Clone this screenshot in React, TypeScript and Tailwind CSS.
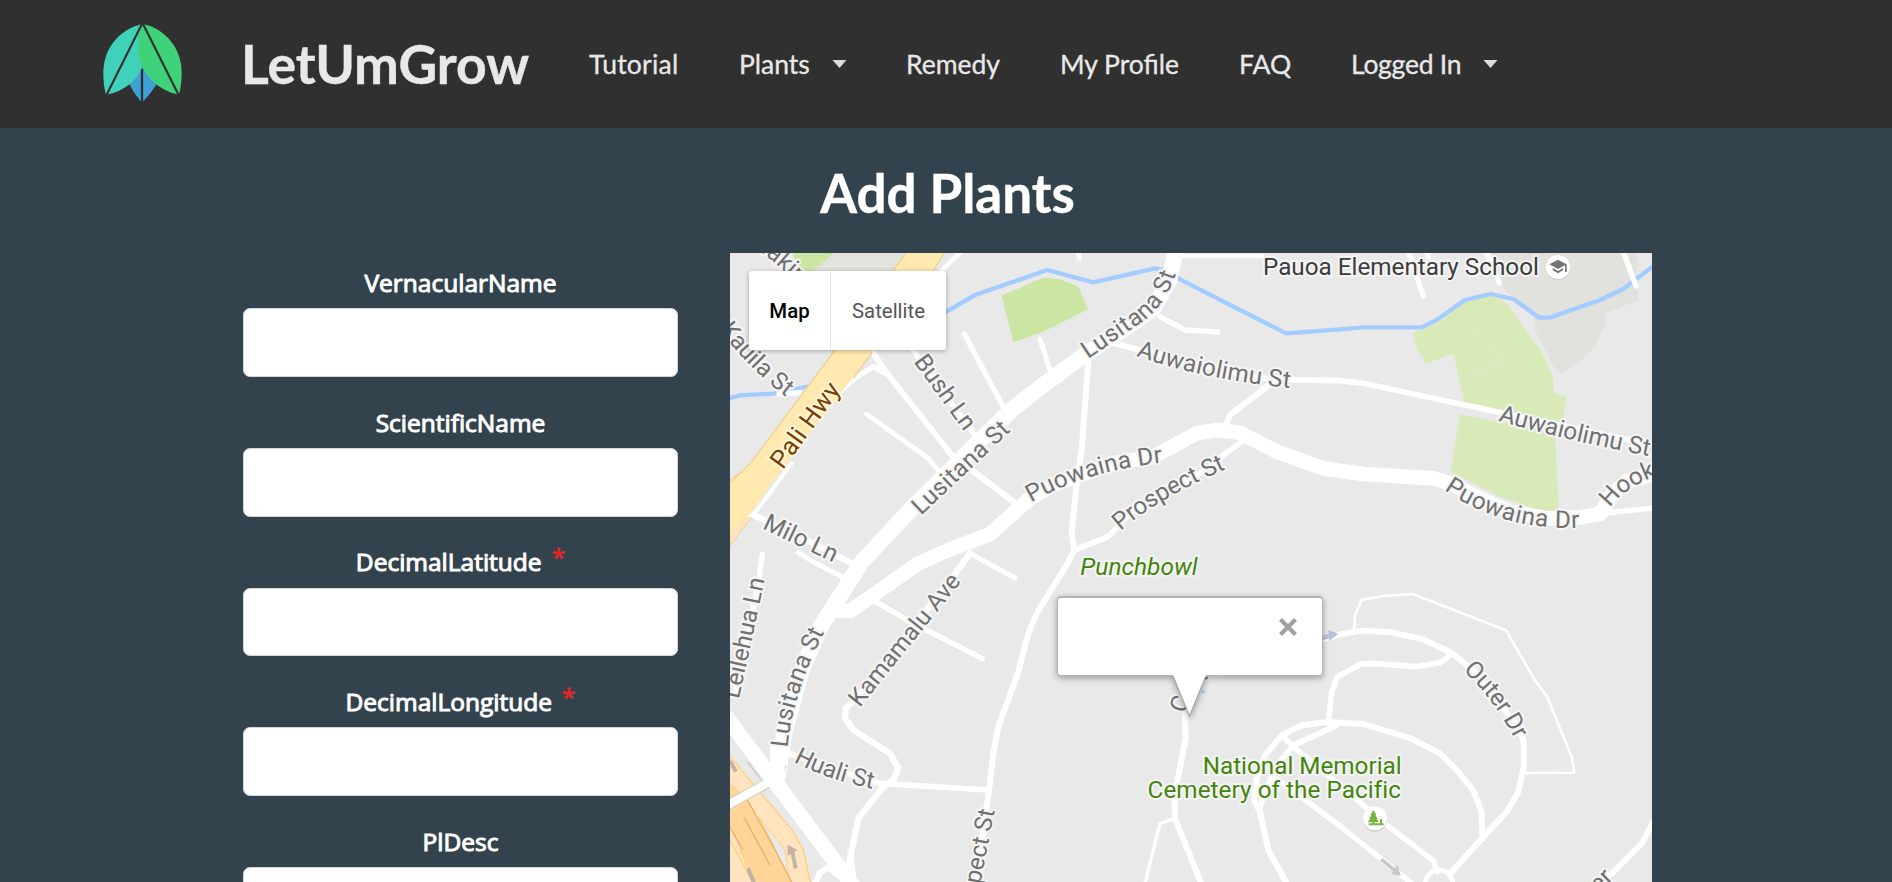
import React from "react";

type Item = { label: string; width: string; caret?: boolean };

const navItems: Item[] = [
  { label: "Tutorial", width: "w-[150px] tracking-[0.250px]" },
  { label: "Plants", width: "w-[167px]", caret: true },
  { label: "Remedy", width: "w-[154px]" },
  { label: "My Profile", width: "w-[179px]" },
  { label: "FAQ", width: "w-[112px]" },
  { label: "Logged In", width: "w-[160px] tracking-[-0.250px]", caret: true },
];

const fields = [
  { label: "VernacularName" },
  { label: "ScientificName" },
  { label: "DecimalLatitude", required: true },
  { label: "DecimalLongitude", required: true },
  { label: "PlDesc" },
];

/* Roads: [stroke width, points] */
const roads: [number, string][] = [
  [48, "1337,0 1318,90 1270,175 1200,225 1070,310 940,405 850,475 730,590 540,780 395,936 325,1046 272,1130 215,1260 165,1440 142,1580"],
  [44, "300,1081 360,1083 430,1035 565,940 660,898 780,852 900,745 980,700 1150,640 1270,620 1400,550 1460,540 1530,548 1640,605 1780,655 1830,662 1900,672 2110,685 2160,700 2250,745 2340,785 2450,805 2540,803 2610,793 2645,735 2690,695 2770,672"],
  [16, "2620,790 2770,774"],
  [14, "690,9 620,75"],
  [16, "475,375 430,350 375,385 330,425"],
  [18, "430,310 475,375 665,615 850,755"],
  [15, "410,493 595,625 640,680"],
  [15, "545,295 760,590"],
  [16, "703,252 830,490"],
  [12, "185,640 70,795 50,795"],
  [18, "70,795 190,850 375,945"],
  [15, "205,908 250,936 345,985"],
  [16, "97,912 85,1000 15,1330"],
  [15, "720,910 855,984"],
  [19, "720,910 680,965 375,1350 347,1375 345,1405 370,1440 480,1510 505,1555 490,1590 460,1610 385,1705 355,1850 350,1900"],
  [16, "430,1051 550,1120 757,1226"],
  [17, "150,1500 320,1560 450,1600 775,1620"],
  [18, "1075,330 1055,600 1040,700 1025,850 1033,900 1015,936 920,1090 895,1150 865,1266 805,1430 790,1510 775,1640 765,1700 740,1896"],
  [17, "1033,900 1135,860 1200,790 1460,640 1480,615 1535,575"],
  [17, "1150,280 1230,300 1500,365 1620,388 1830,392 1900,400 2205,465 2320,490 2770,585"],
  [18, "1630,395 1500,495 1490,520"],
  [16, "1290,200 1365,240 1463,246"],
  [15, "930,268 960,360"],
  [14, "1360,18 1595,18"],
  [15, "1045,5 1048,25"],
  [16, "2035,5 2080,138"],
  [16, "2090,5 2095,20"],
  [16, "2268,5 2308,100"],
  [16, "2680,5 2718,108"],
  [18, "1365,1390 1367,1466 1333,1640 1335,1706 1414,1900"],
  [10, "1335,1706 1290,1720 1245,1900"],
  [18, "1775,1168 1830,1153 1895,1142 1985,1147 2080,1168 2165,1209 2230,1260 2310,1360 2370,1440 2381,1476 2382,1546 2365,1626 2330,1686 2255,1766 2165,1866"],
  [17, "2165,1212 2130,1238 2060,1250 1925,1240 1893,1242 1822,1280 1805,1326 1795,1420"],
  [18, "2257,1766 2255,1686 2230,1621 2180,1560 2130,1511 2045,1466 1900,1422 1790,1416 1715,1426 1655,1456 1605,1516 1580,1586 1572,1650 1590,1686 1615,1800 1670,1900"],
  [17, "1820,1426 1690,1486 1640,1546 1600,1640 1588,1680"],
  [16, "1655,1456 1690,1490 1830,1606 1965,1721 2110,1832 2122,1866"],
  [16, "1640,1586 1830,1728 2045,1900"],
  [8, "1873,1138 1875,1096 1895,1049 1960,1038 2048,1032 2328,1141 2415,1291 2452,1341 2525,1521 2533,1568 2382,1569"],
  [18, "2770,1715 2735,1781 2650,1866 2600,1910"],
];

/* Street names: [id, path the name follows, name, extra letter spacing] */
const streets: [string, string, string, number?][] = [
  ["makini", "M52,-18 Q130,20 300,200", "Makini St"],
  ["kauila", "M-32,238 Q60,365 205,468", "Kauila St"],
  ["bush", "M550,335 L710,555", "Bush Ln"],
  ["lus1", "M573,797 L880,508", "Lusitana St", 1],
  ["lus2", "M1074,327 Q1170,262 1215,230 Q1325,165 1353,10", "Lusitana St", 1.5],
  ["auw1", "M1218,318 Q1440,395 1740,420", "Auwaiolimu St", 0.6],
  ["auw2", "M2304,512 Q2520,575 2830,632", "Auwaiolimu St"],
  ["puo1", "M903,758 Q1080,655 1340,634", "Puowaina Dr", 0.6],
  ["puo2", "M2142,720 Q2340,858 2610,829", "Puowaina Dr", 2],
  ["hook", "M2640,774 Q2690,698 2850,655", "Hookui St"],
  ["pros1", "M1172,843 Q1280,745 1530,638", "Prospect St", -0.8],
  ["milo", "M95,835 L340,952", "Milo Ln"],
  ["kama", "M389,1374 L725,957", "Kamamalu Ave"],
  ["leil", "M26,1348 Q60,1200 110,960", "Leilehua Ln"],
  ["lus3", "M173,1493 Q188,1310 316,1085", "Lusitana St", 0.5],
  ["huali", "M190,1535 Q310,1600 480,1625", "Huali St"],
  ["pros2", "M722,2050 L806,1620", "Prospect St"],
  ["outer", "M2199,1261 Q2300,1355 2365,1490", "Outer Dr", -1],
  ["crater", "M1366,1392 Q1385,1315 1432,1285 Q1480,1262 1640,1246", "Crater Rd"],
  ["upper", "M2607,1930 L2700,1838", "er"],
];

function LeafLogo() {
  return (
    <svg className="-mt-[3px] block h-[79px] w-[79px]" viewBox="68 70 240 237" aria-hidden="true">
      <path d="M188 203 L148 254 Q162 284 183 307 L190 307 Q213 284 231 254Z" fill="#3fa0d4" />
      <path d="M184 72 C120 88 69 142 69 220 Q69 257 76 283 L84 285 Q153 270 188 205 L200 90Z" fill="#40d1bb" />
      <path d="M192 72 C255 86 307 142 307 220 Q307 255 300 281 L292 285 C222 268 174 206 174 145 Q174 103 188 73Z" fill="#40d27a" />
      <path d="M186.500 208V310" stroke="#303030" strokeWidth="7" />
      <path d="M187 70 L78 289M189 70 L298 288" stroke="#303030" strokeWidth="6.500" />
    </svg>
  );
}

function StreetMap() {
  return (
    <svg
      className="block h-full w-full"
      viewBox="0 9 2766 1887"
      preserveAspectRatio="xMinYMin slice"
      fill="none"
      fontFamily="Roboto, sans-serif"
      fontSize="72.800"
    >
      <rect y="0" width="2766" height="1900" fill="#e9e9e9" />
      <path d="M300 0H540L495 65H235Z" fill="#e2e3dd" />
      <path d="M185 0H320L245 66L205 62Z" fill="#cbe6a3" />
      <path d="M815 137L900 100L940 83L990 88L1045 110L1075 178L940 245L850 277Z" fill="#cbe6a3" />
      <path d="M2285 0H2720L2725 150L2628 190V215L2595 290L2550 335L2497 370L2475 357L2413 235V205L2320 115Z" fill="#e1e2dd" />
      <path d="M2048 250L2130 215L2205 150L2280 138L2310 145L2335 165L2440 315L2470 385L2472 425L2510 440L2497 520L2203 455L2187 385L2170 310L2085 342L2078 318L2063 305Z" fill="#d8eab8" />
      <path d="M2190 493L2475 550L2487 788L2420 780L2300 735L2162 665Z" fill="#d8eab8" />
      <path d="M2187 385L2245 370L2318 331L2338 352M2245 370L2258 408M2238 245L2252 278M2270 280L2318 331" stroke="#e5e8dc" strokeWidth="3" />

      <g stroke="#a3ccff" strokeWidth="13" strokeLinejoin="round">
        <path d="M640 190L735 135L900 78L952 60L1090 97L1275 55L1310 62L1350 88L1668 250L1830 238L1900 232H2075L2120 210L2205 150L2282 132L2350 147L2428 203H2460L2610 150L2680 117L2770 48" />
        <path d="M-5 445L30 436L130 431L240 408" />
      </g>
      <path d="M140 432L215 428" stroke="#fff" strokeWidth="16" />

      <path d="M0 690L60 645L30 740L62 805L0 888Z" fill="#ffe2bf" stroke="#f6cc94" strokeWidth="3" />

      <g stroke="#fff" strokeLinejoin="round" strokeLinecap="round">
        {roads.map(([width, points], i) => (
          <polyline key={i} points={points} strokeWidth={width} />
        ))}
        <circle cx="2127" cy="1901" r="41" strokeWidth="15" />
      </g>

      <path d="M535 0L315 300L65 635L0 700V855L62 790L150 665L425 310L610 62L648 0Z" fill="#ffe9ae" />
      <path d="M535 0L315 300L65 635L0 700M425 310L370 385M610 62L648 0" stroke="#e8d296" strokeWidth="4" />

      <path d="M-5 1513L190 1745L220 1800L242 1900H-5Z" fill="#ffe4bf" stroke="#ffcf80" strokeWidth="4" />
      <path d="M-5 1590L50 1646L125 1780L187 1900H75L0 1730Z" fill="#ffd597" />
      <path d="M88 1702L165 1800L178 1896L125 1775Z" fill="#e9e9e9" stroke="#ffcf80" strokeWidth="3" />
      <path d="M50 1646L125 1780L187 1900M42 1702L120 1845M-2 1730L38 1798" stroke="#e9b067" strokeWidth="4" />
      <path d="M-5 1762L70 1900M28 1795L75 1900" stroke="#ffcf80" strokeWidth="4" />
      <path d="M92 1504L120 1540M52 1536L95 1590M168 1545L153 1592M-5 1647L105 1590M-5 1680L118 1612" stroke="#ccccbf" strokeWidth="4" />
      <path d="M-5 1664L120 1595" stroke="#fff" strokeWidth="25" />
      <path d="M-15 1396L125 1582L375 1915" stroke="#fff" strokeWidth="46" />
      <path d="M142 1470V1590" stroke="#fff" strokeWidth="44" />
      <path d="M255 1900L270 1868L295 1852L330 1880M360 1800L372 1900" stroke="#fff" strokeWidth="18" />
      <path d="M0 1533L18 1565M54 1855L72 1898M197 1855L187 1805" stroke="#c3b2a6" strokeWidth="12" />
      <path d="M173 1784L202 1800L173 1818Z" fill="#c3b2a6" />

      <path d="M1770 1166L1800 1157" stroke="#c3c8dc" strokeWidth="14" />
      <path d="M1795 1140L1825 1151L1798 1172Z" fill="#b9bfd6" />
      <path d="M1954 1828L1995 1862" stroke="#c8c8c8" strokeWidth="11" />
      <path d="M2013 1878L2002 1845L1984 1872Z" fill="#c8c8c8" />

      <g fill="#707070" stroke="#f5f5f5" strokeWidth="12" strokeLinejoin="round" style={{ paintOrder: "stroke" }}>
        {streets.map(([id, d]) => (
          <path key={id} id={id} d={d} fill="none" stroke="none" />
        ))}
        {streets.map(([id, , name, spacing]) => (
          <text key={id} letterSpacing={spacing ?? 0}>
            <textPath href={"#" + id}>{name}</textPath>
          </text>
        ))}
        <text transform="translate(158 661) rotate(-54)" fontSize="76" letterSpacing="1" fill="#7a3e00" stroke="#fff6dc">
          Pali Hwy
        </text>
        <text x="1599" y="76" fill="#3c3c3c">Pauoa Elementary School</text>
        <text x="1051" y="975" fontSize="73.500" fill="#43850c" fontStyle="italic">Punchbowl</text>
        <text x="2015" y="1572" textAnchor="end" fill="#43850c">National Memorial</text>
        <text x="2013" y="1645" textAnchor="end" letterSpacing="0.200" fill="#43850c">Cemetery of the Pacific</text>
      </g>

      <circle cx="2484" cy="55" r="36" fill="#cfcfcf" />
      <circle cx="2484" cy="51" r="36" fill="#fff" />
      <path d="M2484 29L2510 43V66H2505V46L2484 57L2458 43ZM2468 54L2484 63L2499 54V61L2484 70L2468 61Z" fill="#757575" />
      <circle cx="1935" cy="1709" r="36" fill="#cfcfcf" />
      <circle cx="1935" cy="1705" r="36" fill="#fff" />
      <path d="M1930 1680L1939 1695H1936L1943 1707H1940L1947 1717H1933V1720H1950V1707H1956V1720H1961V1726H1916V1720H1927V1717H1913L1920 1707H1917L1924 1695H1921Z" fill="#7cb342" />
      <path d="M1416 1325h8" stroke="#9cc6f2" strokeWidth="6" />
    </svg>
  );
}

function InfoWindow() {
  return (
    <div className="absolute left-[327px] top-[343px] h-[125px] w-[266px] drop-shadow-[0_2px_3px_rgba(0,0,0,0.35)]">
      <div className="flex h-[80px] justify-end rounded-[4px] border border-t-2 border-[#b5b5b5] bg-white pr-[25px] pt-[20px]">
        <svg className="h-[18px] w-[18px]" viewBox="0 0 18 18" aria-hidden="true">
          <path d="M1.500 1.500L16.500 16.500M16.500 1.500L1.500 16.500" stroke="#a0a0a0" strokeWidth="4.200" />
        </svg>
      </div>
      <svg className="relative -top-px left-[115px] block h-[42px] w-[35px]" viewBox="0 0 35 42" aria-hidden="true">
        <path d="M1 0L17.500 41L34 0Z" fill="#fff" />
        <path d="M1 1L17.500 41L34 1" fill="none" stroke="#a8a8a8" strokeWidth="1.200" />
      </svg>
    </div>
  );
}

export default function App() {
  return (
    <div className="flex h-[882px] flex-col overflow-hidden bg-[#33434d] font-[Lato,sans-serif]">
      <header className="flex h-32 shrink-0 items-center bg-[#303030] pl-[103px] text-[#e8e8e8]">
        <LeafLogo />
        <div className="ml-[59px] w-[348px] whitespace-nowrap text-[53.500px] font-bold leading-none [-webkit-text-stroke:0.400px_#e8e8e8]">
          LetUmGrow
        </div>
        <nav className="flex items-center text-[26.500px] leading-8 [-webkit-text-stroke:0.300px_#e8e8e8]">
          {navItems.map((item) => (
            <a key={item.label} className={"flex items-center whitespace-nowrap " + item.width}>
              {item.label}
              {item.caret && (
                <svg className="ml-[22px] h-[8px] w-[15px]" viewBox="0 0 15 8" aria-hidden="true">
                  <path d="M0.500 0H14.500L7.500 8Z" fill="#dcdcdc" />
                </svg>
              )}
            </a>
          ))}
        </nav>
      </header>

      <h1 className="mt-[35px] h-[90px] shrink-0 pl-[3px] text-center text-[53px] font-bold leading-[60px] text-white [-webkit-text-stroke:0.400px_white]">
        Add Plants
      </h1>

      <main className="flex min-h-0 flex-1 pl-[243px]">
        <form className="flex w-[435px] shrink-0 flex-col pt-[12px]">
          {fields.map((field) => (
            <div key={field.label} className="h-[139.700px] shrink-0">
              <label className="flex h-[43.300px] items-start justify-center font-['Open_Sans',sans-serif] text-[24.500px] leading-[35px] text-white [-webkit-text-stroke:1px_white]">
                {field.label}
                {field.required && (
                  <span className="-mt-[5px] ml-[10px] text-[#db2828] [-webkit-text-stroke:1px_#db2828]">*</span>
                )}
              </label>
              <input className="block h-[68.600px] w-full rounded-[7px] border border-[#d4d7d9] bg-white" aria-label={field.label} />
            </div>
          ))}
        </form>

        <section className="relative ml-[52px] h-full w-[922px] shrink-0 overflow-hidden">
          <StreetMap />
          <div className="absolute left-[19px] top-[18px] flex h-[79px] rounded-[3px] bg-white pt-px font-[Roboto,sans-serif] text-[20.400px] shadow-[0_1px_5px_rgba(0,0,0,0.3)]">
            <button className="w-[82px] border-r border-[#e4e4e4] font-medium text-black">Map</button>
            <button className="w-[115px] text-[#565656]">Satellite</button>
          </div>
          <InfoWindow />
        </section>
      </main>
    </div>
  );
}
